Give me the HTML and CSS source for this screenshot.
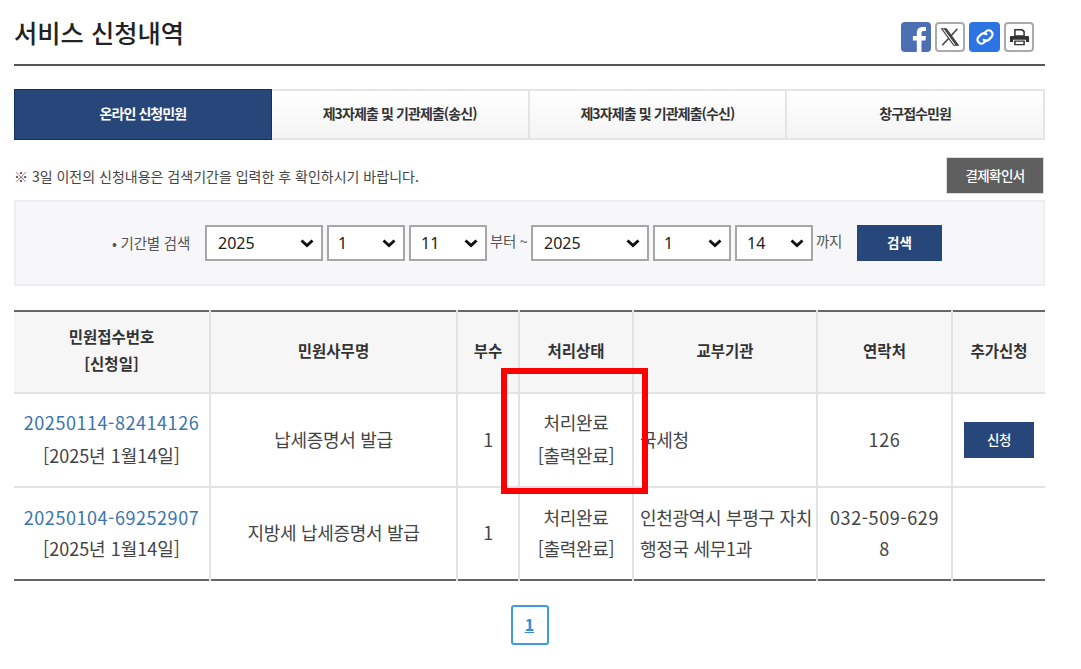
FILE: index.html
```html
<!DOCTYPE html>
<html lang="ko">
<head>
<meta charset="utf-8">
<title>서비스 신청내역</title>
<link rel="stylesheet" href="styles.css">
</head>
<body>
<main class="page">
  <header class="head">
    <h1 class="title">서비스 신청내역</h1>
    <div class="share">
      <a class="ico ico-fb" href="#" aria-label="페이스북"><svg viewBox="0 0 30 30" width="30" height="30"><path fill="#fff" d="M20.5 30V18.6h3.900l.6-4.600h-4.500v-2.700c0-1.300.5-2.200 2.300-2.200H25V5.100c-.5-.1-1.900-.2-3.400-.2-3.400 0-5.800 2.100-5.800 5.900V14h-3.900v4.600h3.900V30z"/></svg></a>
      <a class="ico ico-x" href="#" aria-label="X"><svg viewBox="0 0 30 30" width="26" height="26"><path fill="none" stroke="#444" stroke-width="1.400" d="M5.500 5.500h5.200l13.800 19h-5.200z"/><path fill="#444" d="M7.700 5.500h3l13.800 19h-3z"/><path fill="none" stroke="#444" stroke-width="1.800" d="M23.500 5.500 16 13.900M13.600 16.500 6 24.500"/></svg></a>
      <a class="ico ico-link" href="#" aria-label="링크"><svg viewBox="0 0 30 30" width="30" height="30"><g fill="none" stroke="#fff" stroke-width="2.200" stroke-linecap="round"><path d="M14 11.500l2-2a3.800 3.800 0 0 1 5.300 0l.2.200a3.800 3.800 0 0 1 0 5.300l-2.600 2.600a3.800 3.800 0 0 1-5.200.2"/><path d="M16 18.500l-2 2a3.800 3.800 0 0 1-5.300 0l-.2-.2a3.800 3.800 0 0 1 0-5.300l2.600-2.600a3.800 3.800 0 0 1 5.200-.2"/></g></svg></a>
      <a class="ico ico-print" href="#" aria-label="인쇄"><svg viewBox="0 0 30 30" width="23" height="23"><path fill="#333" d="M8 4h11l3 3v6H8zM10 6v6h10V8l-2-2zM4 13h22a1.500 1.500 0 0 1 1.500 1.500V21h-4v-3h-17v3h-4v-6.500A1.500 1.500 0 0 1 4 13zM8 19h14v6H8z"/><path fill="#fff" d="M10 20.500h10v3H10z"/></svg></a>
    </div>
  </header>

  <nav class="tabs">
    <a class="tab tab-on" href="#">온라인 신청민원</a>
    <a class="tab" href="#">제3자제출 및 기관제출(송신)</a>
    <a class="tab" href="#">제3자제출 및 기관제출(수신)</a>
    <a class="tab" href="#">창구접수민원</a>
  </nav>

  <div class="notice">
    <p class="notice-text">※ 3일 이전의 신청내용은 검색기간을 입력한 후 확인하시기 바랍니다.</p>
    <a class="btn-gray" href="#">결제확인서</a>
  </div>

  <form class="search">
    <span class="search-label">• 기간별 검색</span>
    <select class="sel sel-y"><option>2025</option></select>
    <select class="sel sel-m"><option>1</option></select>
    <select class="sel sel-d"><option>11</option></select>
    <span class="search-unit">부터 ~</span>
    <select class="sel sel-y"><option>2025</option></select>
    <select class="sel sel-m"><option>1</option></select>
    <select class="sel sel-d"><option>14</option></select>
    <span class="search-unit unit-end">까지</span>
    <button class="btn-search" type="button">검색</button>
  </form>

  <table class="list">
    <colgroup>
      <col class="c1"><col class="c2"><col class="c3"><col class="c4"><col class="c5"><col class="c6"><col class="c7">
    </colgroup>
    <thead>
      <tr>
        <th>민원접수번호<br>[신청일]</th>
        <th>민원사무명</th>
        <th>부수</th>
        <th>처리상태</th>
        <th>교부기관</th>
        <th>연락처</th>
        <th>추가신청</th>
      </tr>
    </thead>
    <tbody>
      <tr class="row-a">
        <td><a class="num" href="#">20250114-82414126</a><br><span class="date">[2025년 1월14일]</span></td>
        <td>납세증명서 발급</td>
        <td>1</td>
        <td>처리완료<br>[출력완료]</td>
        <td class="left">국세청</td>
        <td class="tel">126</td>
        <td><a class="btn-apply" href="#">신청</a></td>
      </tr>
      <tr class="row-b">
        <td><a class="num" href="#">20250104-69252907</a><br><span class="date">[2025년 1월14일]</span></td>
        <td>지방세 납세증명서 발급</td>
        <td>1</td>
        <td>처리완료<br>[출력완료]</td>
        <td class="left">인천광역시 부평구 자치행정국 세무1과</td>
        <td class="tel">032-509-6298</td>
        <td></td>
      </tr>
    </tbody>
  </table>

  <div class="paging"><a class="page-num" href="#">1</a></div>

  <div class="highlight"></div>
</main>
</body>
</html>
```
FILE: styles.css
```css
* { box-sizing: border-box; }
html, body { margin: 0; padding: 0; background: #fff; }
body {
  font-family: "Noto Sans CJK KR", "Noto Sans", sans-serif;
  color: #333;
  overflow: hidden;
}
a { color: inherit; text-decoration: none; }
.page { position: relative; width: 1031px; margin-left: 14px; height: 669px; }

.head {
  height: 66px;
  border-bottom: 2px solid #555;
  display: flex;
  justify-content: space-between;
  padding: 22px 11px 0 0;
}
.title { margin: -8px 0 0; font-size: 25.3px; font-weight: 500; line-height: 36px; color: #222; }
.share { display: flex; gap: 4px; height: 30px; }
.ico { width: 30px; height: 30px; border-radius: 4px; display: flex; align-items: center; justify-content: center; overflow: hidden; }
.ico-fb { background: #4c6fb3; }
.ico-x, .ico-print { border: 2px solid #aaa; background: #fff; }
.ico-link { background: #2c74e2; width: 31px; }

.tabs {
  display: flex;
  margin-top: 23px;
  height: 51px;
  border: 2px solid #e4e4e4;
  border-left: 0;
}
.tab {
  flex: 1;
  display: flex;
  align-items: center;
  justify-content: center;
  padding-bottom: 3px;
  font-size: 14px;
  font-weight: 700;
  letter-spacing: -0.9px;
  color: #333;
  border-right: 2px solid #e4e4e4;
  background: linear-gradient(#fff, #f4f4f4);
}
.tab:last-child { border-right: 0; }
.tab-on {
  margin: -2px 0;
  background: #27467a;
  border: 1px solid #16305c;
  color: #fff;
}

.notice { display: flex; justify-content: space-between; align-items: center; margin-top: 17px; height: 37px; padding-right: 1px; }
.notice-text { margin: 0; font-size: 14px; color: #444; }
.btn-gray {
  width: 98px; height: 37px;
  display: flex; align-items: center; justify-content: center;
  padding-bottom: 2px;
  background: #5f5f5f; border: 1px solid #ddd;
  color: #fff; font-size: 13.500px; font-weight: 500; letter-spacing: -0.6px;
}

.search {
  margin-top: 6px;
  height: 86px;
  background: #f7f7fa;
  border: 2px solid #eeeef0;
  display: flex;
  align-items: center;
  padding-left: 93px;
}
.search-label { width: 96px; padding: 0 0 2px 3px; font-size: 14.500px; color: #555; letter-spacing: -0.2px; }
.sel {
  height: 36px;
  appearance: none;
  font-family: "Noto Sans", sans-serif;
  font-size: 16px;
  color: #222;
  background-color: #fff;
  background-image: url("data:image/svg+xml,%3Csvg xmlns='http://www.w3.org/2000/svg' width='14' height='9' viewBox='0 0 14 9'%3E%3Cpath fill='none' stroke='%23111' stroke-width='3' d='M1.500 1.500 7 6.500l5.500-5'/%3E%3C/svg%3E");
  background-repeat: no-repeat;
  background-position: right 7px center;
  border: 2px solid #a6a6a6;
  border-radius: 0;
  padding: 0 0 0 11px;
  margin-right: 4px;
}
.sel-y { width: 118px; }
.sel-m { width: 78px; padding-left: 9px; }
.sel-d { width: 78px; padding-left: 10px; margin-right: 3px; }
.search-unit { font-size: 14.500px; color: #555; margin-right: 1px; width: 40px; letter-spacing: -0.3px; margin-top: -6px; white-space: nowrap; }
.btn-search {
  width: 85px; height: 36px;
  background: #27467a; border: 0; color: #fff;
  padding: 0 0 2px;
  font: 700 13.500px "Noto Sans CJK KR", sans-serif;
}

.list {
  margin-top: 24px;
  width: 1031px;
  table-layout: fixed;
  border-collapse: collapse;
  border-top: 2px solid #666;
  border-bottom: 2px solid #666;
}
.c1 { width: 196px; } .c2 { width: 247px; } .c3 { width: 62px; } .c4 { width: 114px; }
.c5 { width: 184px; } .c6 { width: 135px; } .c7 { width: 93px; }
.list th, .list td {
  border: 2px solid #e2e2e2;
  padding: 0 6px;
  text-align: center;
  word-break: break-all;
}
.list tr > :first-child { border-left: 0; }
.list tr > :last-child { border-right: 0; }
.list thead tr:first-child th { border-top: 0; }
.list tbody tr:last-child td { border-bottom: 0; }
.list th { height: 82px; padding-bottom: 4px; background: #f6f6f6; font-size: 15.500px; font-weight: 700; line-height: 27px; color: #333; }
.list td { font-size: 18px; padding-bottom: 2px; color: #444; letter-spacing: -0.3px; }
.row-a td { height: 94px; line-height: 33px; }
.row-b td { height: 93px; line-height: 31px; }
.list td.left { text-align: left; padding-right: 2px; }
.list td.tel { letter-spacing: 0.6px; padding-left: 9px; padding-right: 9px; }
.num { color: #3b74ad; letter-spacing: 0.55px; }
.date { letter-spacing: 0; }
.btn-apply {
  display: inline-block; width: 70px; height: 36px; line-height: 34px;
  background: #27467a; color: #fff; font-size: 13.500px; font-weight: 500; vertical-align: middle;
}

.paging { display: flex; justify-content: center; margin-top: 24px; }
.page-num {
  width: 38px; height: 40px;
  display: flex; align-items: center; justify-content: center;
  padding-bottom: 3px;
  border: 2px solid #3d9be0;
  border-radius: 3px;
  color: #2f8fd8;
  font-size: 16px;
  font-weight: 700;
  text-decoration: underline;
}

.highlight {
  position: absolute;
  left: 487px; top: 368px;
  width: 147px; height: 126px;
  border: 6px solid #fe0000;
  pointer-events: none;
}
```
